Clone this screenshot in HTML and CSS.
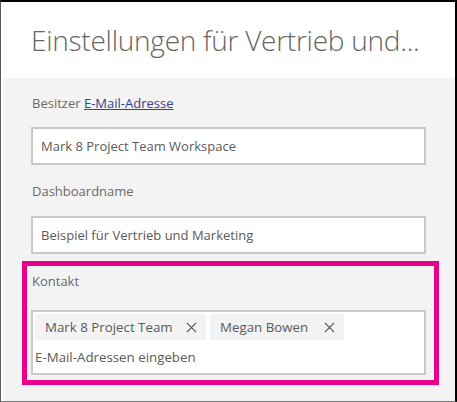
FILE: index.html
```html
<!DOCTYPE html>
<html lang="de">
<head>
<meta charset="utf-8">
<title>Einstellungen</title>
<link rel="stylesheet" href="styles.css">
</head>
<body>
<div class="frame">
  <header class="header">
    <h1 class="title">Einstellungen für Vertrieb und...</h1>
  </header>
  <main class="panel">
    <div class="label label-owner">Besitzer <a class="link" href="#">E-Mail-Adresse</a></div>
    <div class="input">Mark 8 Project Team Workspace</div>
    <div class="label label-name">Dashboardname</div>
    <div class="input">Beispiel für Vertrieb und Marketing</div>
    <section class="highlight">
      <div class="label label-contact">Kontakt</div>
      <div class="people">
        <div class="chips">
          <span class="chip chip-first">Mark 8 Project Team
            <svg class="x" viewBox="0 0 12 12" width="11" height="11"><path d="M1 1 L11 11 M11 1 L1 11" stroke="#555" stroke-width="1.3" fill="none"/></svg>
          </span>
          <span class="chip chip-second">Megan Bowen
            <svg class="x" viewBox="0 0 12 12" width="11" height="11"><path d="M1 1 L11 11 M11 1 L1 11" stroke="#555" stroke-width="1.3" fill="none"/></svg>
          </span>
        </div>
        <div class="placeholder">E-Mail-Adressen eingeben</div>
      </div>
    </section>
  </main>
</div>
</body>
</html>
```
FILE: styles.css
```css
* { box-sizing: border-box; }
html, body { margin: 0; padding: 0; background: #ffffff; }
body { font-family: "Open Sans", "Noto Sans", sans-serif; }

.frame {
  width: 457px;
  height: 402px;
  border-top: 2px solid #000;
  border-left: 1px solid #5a5a5a;
  border-right: 2px solid #000;
  border-bottom: 1px solid #777;
  padding-left: 2px;
  background: #fff;
  display: flex;
  flex-direction: column;
  overflow: hidden;
}

.header {
  height: 76px;
  background: #fff;
  padding: 0 0 0 28px;
  display: flex;
  align-items: center;
}
.title {
  margin: 0;
  font-weight: 300;
  font-size: 28px;
  color: #666;
  white-space: nowrap;
  letter-spacing: -0.25px;
}

.panel {
  flex: 1;
  background: #f3f3f3;
  padding: 0 29px 0 28px;
  display: flex;
  flex-direction: column;
}

.label {
  font-size: 13px;
  line-height: 18px;
  color: #6a6a6a;
  padding-left: 1px;
}
.label-owner { margin-top: 16px; margin-bottom: 15px; }
.label-name { margin-top: 17px; margin-bottom: 16px; }
.label-contact { margin-bottom: 20px; }

.link { color: #33418f; text-decoration: underline; }

.input {
  height: 38px;
  background: #fff;
  border: 2px solid #c8c8c8;
  padding: 0 8px;
  font-size: 13px;
  line-height: 34px;
  color: #5a5a5a;
}

.highlight {
  margin: 7px -13px 0 -9px;
  border: 5px solid #e8008a;
  padding: 6px 8px 5px 4px;
}

.people {
  height: 65px;
  background: #fff;
  border: 2px solid #c8c8c8;
  padding: 2px 2px 0 2px;
}
.chips { display: flex; gap: 4px; }
.chip {
  height: 26px;
  background: #f3f3f3;
  display: inline-flex;
  align-items: center;
  font-size: 13.3px;
  color: #5a5a5a;
  padding-left: 10px;
}
.chip-first { width: 171px; }
.chip-second { width: 134px; }
.x { margin-left: auto; margin-right: 9px; }

.placeholder {
  font-size: 13.3px;
  line-height: 18px;
  color: #5a5a5a;
  margin-top: 8px;
  padding-left: 0;
}
```
